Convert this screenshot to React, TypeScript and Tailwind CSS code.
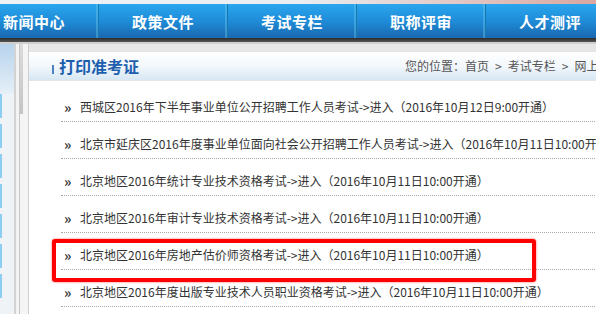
const navItems = ["新闻中心", "政策文件", "考试专栏", "职称评审", "人才测评"];

const rows = [
  "西城区2016年下半年事业单位公开招聘工作人员考试->进入（2016年10月12日9:00开通）",
  "北京市延庆区2016年度事业单位面向社会公开招聘工作人员考试->进入（2016年10月11日10:00开通）",
  "北京地区2016年统计专业技术资格考试->进入（2016年10月11日10:00开通）",
  "北京地区2016年审计专业技术资格考试->进入（2016年10月11日10:00开通）",
  "北京地区2016年房地产估价师资格考试->进入（2016年10月11日10:00开通）",
  "北京地区2016年度出版专业技术人员职业资格考试->进入（2016年10月11日10:00开通）",
];

export default function App() {
  return (
    <div
      className="relative w-[596px] h-[314px] overflow-hidden bg-[#e6e6e6]"
      style={{ fontFamily: '"Noto Sans CJK SC", "Noto Sans", sans-serif' }}
    >
      {/* banner bottom edge */}
      <div className="h-[4px] bg-gradient-to-r from-[#eef2f5] via-[#e9eef2] to-[#d9a7a0]" />

      {/* main nav */}
      <div className="h-[34px] bg-gradient-to-b from-[#2aa6ee] via-[#1f8cd8] to-[#1a68b0] flex ml-[-30px]">
        {navItems.map((item) => (
          <div
            key={item}
            className="w-[129px] shrink-0 flex items-center justify-center pt-[3px] border-r border-[#137bb0] shadow-[inset_-2px_0_0_rgba(120,210,240,0.35)] text-white font-bold text-[15px] tracking-[0.5px]"
          >
            {item}
          </div>
        ))}
      </div>
      <div className="h-[4px] bg-gradient-to-b from-[#2c2c2c] to-[#555555]" />
      <div className="h-[2px] bg-[#cfcfcf]" />

      <div className="flex">
        {/* left column */}
        <div className="w-[29px] shrink-0 flex">
          <div className="w-[14px] flex flex-col">
            <div className="h-[50px] bg-gradient-to-b from-[#b7d3ec] to-[#e6f0f8]" />
            <div className="flex flex-col gap-[6px] bg-[#f0f3f6] flex-1">
              {[0, 1, 2, 3, 4, 5, 6].map((i) => (
                <div key={i} className="w-[2px] h-[24px] bg-[#8ccdf3]" />
              ))}
            </div>
          </div>
          <div className="w-[2px] bg-[#d3d3d3]" />
          <div className="w-[3px] bg-[#f3f3f3]" />
          <div className="w-[1px] bg-[#c9c9c9]" />
          <div className="w-[8px] bg-[#f4f4f4] flex flex-col">
            <div className="w-[3px] h-[70px] bg-gradient-to-b from-[#dcdcdc] to-[#c4c4c4]" />
          </div>
          <div className="w-[1px] bg-[#cfcfcf]" />
        </div>

        {/* main panel */}
        <div className="w-[700px] shrink-0 mt-[8px] bg-white h-[300px]">
          <div className="h-[29px] flex items-center pl-[23px] bg-gradient-to-b from-white via-[#f3f8fc] to-[#d7e7f3] border-b border-[#e1e6ea]">
            <div className="w-[2px] h-[9px] mt-[7px] bg-[#4c82c2]" />
            <div className="w-[351px] pl-[5px] text-[16px] font-bold text-[#1d5fae] leading-[18px]">
              打印准考证
            </div>
            <div className="flex text-[12px] text-[#555555] whitespace-nowrap leading-[16px]">
              <span>您的位置：首页</span>
              <span className="mx-[6px]">&gt;</span>
              <span>考试专栏</span>
              <span className="mx-[6px]">&gt;</span>
              <span>网上报名</span>
            </div>
          </div>

          <div className="pt-[4px] pl-[32px]">
            {rows.map((r) => (
              <div
                key={r}
                className="h-[37px] pt-[14px] pl-[3px] flex items-start border-b border-dotted border-[#a8a8a8]"
              >
                <span className="w-[16px] text-[14px] font-bold leading-[16px] text-[#333333]">»</span>
                <span className="text-[12px] leading-[16px] text-[#333333] whitespace-nowrap">{r}</span>
              </div>
            ))}
          </div>
        </div>
      </div>

      {/* annotation box */}
      <div className="absolute left-[52px] top-[239px] w-[484px] h-[43px] border-[4px] border-[#ff0000] rounded-[3px] shadow-[0_0_2px_#ff4040]" />
    </div>
  );
}
